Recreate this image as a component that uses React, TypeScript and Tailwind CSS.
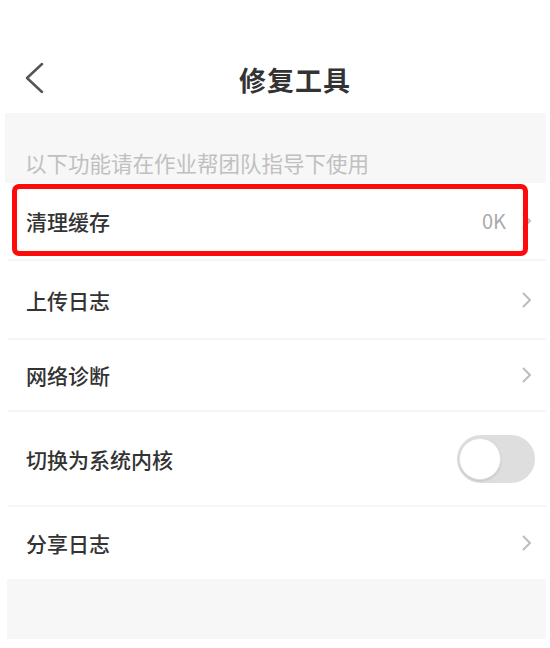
import React from 'react';

type Row = {
  label: string;
  height: string;
  kind: 'value' | 'link' | 'toggle';
  value?: string;
  highlight?: boolean;
};

const rows: Row[] = [
  { label: '清理缓存', height: 'h-[76px]', kind: 'value', value: '0K', highlight: true },
  { label: '上传日志', height: 'h-[77px]', kind: 'link' },
  { label: '网络诊断', height: 'h-[70px]', kind: 'link' },
  { label: '切换为系统内核', height: 'h-[93px]', kind: 'toggle' },
  { label: '分享日志', height: 'h-[72px]', kind: 'link' },
];

function Chevron() {
  return (
    <svg width="10" height="16" viewBox="0 0 10 16" fill="none" className="shrink-0">
      <path d="M1.5 1.5 L8 8 L1.5 14.5" stroke="#bdbdbd" strokeWidth="2" strokeLinecap="round" strokeLinejoin="round" />
    </svg>
  );
}

function Toggle() {
  return (
    <div className="w-[78px] h-[48px] rounded-full bg-[#dedede] flex items-center pl-[2px] mr-[-3px]">
      <div className="w-[42px] h-[42px] rounded-full bg-white border border-[#e3e3e3] shadow-sm" />
    </div>
  );
}

export default function App() {
  return (
    <div
      className="w-[550px] h-[648px] bg-white overflow-hidden flex flex-col"
      style={{ fontFamily: '"Noto Sans CJK SC", "Noto Sans", sans-serif' }}
    >
      {/* header */}
      <div className="h-[113px] flex items-start pt-[62px] flex-none">
        <svg width="20" height="32" viewBox="0 0 20 32" fill="none" className="ml-[24px] shrink-0">
          <path d="M18 2 L3 16 L18 30" stroke="#555555" strokeWidth="2.5" strokeLinecap="round" strokeLinejoin="round" />
        </svg>
        <div className="flex-1 text-center text-[27px] leading-[36px] font-bold text-[#333333] tracking-[1px] pr-[4px]">
          修复工具
        </div>
      </div>

      {/* hint band */}
      <div className="h-[70px] ml-[5px] mr-[4px] bg-[#f7f7f7] pt-[36px] pl-[20px] flex-none">
        <div className="text-[21.5px] leading-[28px] text-[#c0c0c0]">以下功能请在作业帮团队指导下使用</div>
      </div>

      {/* rows */}
      <div className="flex flex-col flex-none">
        {rows.map((row, i) => (
          <React.Fragment key={row.label}>
            {i > 0 && <div className="h-[2px] ml-[8px] mr-[4px] bg-[#f5f5f5]" />}
            <div className={`relative ${row.height} flex items-center pl-[26px] pr-[18px]`}>
              <span className="flex-1 text-[21px] leading-[28px] font-medium text-[#333333]">{row.label}</span>
              {row.kind === 'value' && (
                <div className="flex items-center gap-[16px]">
                  <span className="text-[20px] leading-[28px] text-[#aaaaaa]">{row.value}</span>
                  <Chevron />
                </div>
              )}
              {row.kind === 'link' && <Chevron />}
              {row.kind === 'toggle' && <Toggle />}
              {row.highlight && (
                <div className="absolute left-[12px] top-[1px] w-[516px] h-[72px] border-[5px] border-[#ff0a0a] rounded-[7px] pointer-events-none" />
              )}
            </div>
          </React.Fragment>
        ))}
      </div>

      {/* bottom band */}
      <div className="h-[60px] ml-[7px] mr-[4px] bg-[#f7f7f7] flex-none" />
    </div>
  );
}
